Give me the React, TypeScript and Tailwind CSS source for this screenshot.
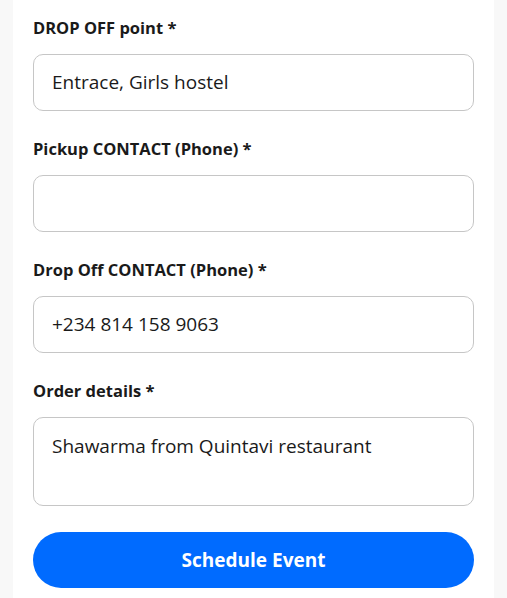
import React from "react";

function Field({ label, value, tall }: { label: string; value?: string; tall?: boolean }) {
  return (
    <div className="flex flex-col">
      <div className="text-[16.5px] font-bold leading-[20px] text-[#1a1a1a]">{label}</div>
      <div
        className={
          "mt-[16px] rounded-[10px] border border-[#c6c6c6] bg-white px-[18px] text-[19px] text-[#1a1a1a] " +
          (tall ? "h-[89px] pt-[14px]" : "flex h-[57px] items-center")
        }
      >
        {value}
      </div>
    </div>
  );
}

export default function App() {
  return (
    <div className="min-h-[598px] w-[507px] bg-[#f8f8f8]" style={{ fontFamily: "'Open Sans', Lato, sans-serif" }}>
      <div className="mx-[13px] flex min-h-[598px] flex-col bg-white px-[20px] pt-[18px]">
        <div className="flex flex-col gap-[28px]">
          <Field label="DROP OFF point *" value="Entrace, Girls hostel" />
          <Field label="Pickup CONTACT (Phone) *" />
          <Field label="Drop Off CONTACT (Phone) *" value="+234 814 158 9063" />
          <Field label="Order details *" value="Shawarma from Quintavi restaurant" tall />
        </div>
        <button className="mt-[26px] h-[56px] w-full rounded-full bg-[#006bff] text-[19px] font-bold text-white">
          Schedule Event
        </button>
      </div>
    </div>
  );
}
